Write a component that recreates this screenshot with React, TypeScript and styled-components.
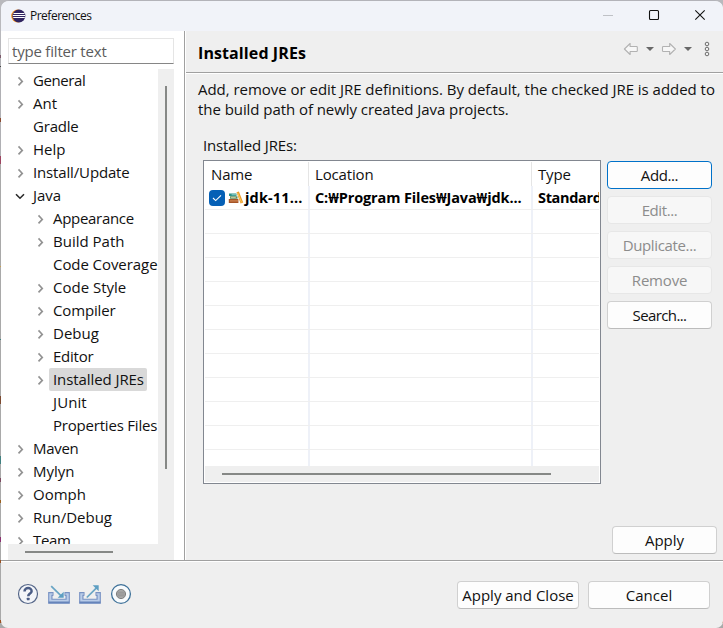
import React from "react";
import styled, { createGlobalStyle, css } from "styled-components";

const Global = createGlobalStyle`
  * { box-sizing: border-box; }
  html, body { margin: 0; background: #b4b4b8; }
  body { overflow: hidden; }
  button { font: inherit; }
`;

const Desktop = styled.div`
  width: 723px;
  height: 628px;
  padding-left: 1px;
  background: linear-gradient(
    #b9b9bd 0 55px, #7c5a6a 55px 58px, #b0b0b4 58px 66px, #444 66px 67px, #b0b0b4 67px 118px,
    #8a4a30 118px 122px, #b0b0b4 122px 156px, #9c4460 156px 164px, #a9a9a9 164px 266px,
    #c8a050 266px 267px, #a9a9a9 267px 339px, #408080 339px 340px, #a9a9a9 340px 396px,
    #7c4a30 396px 404px, #a9a9a9 404px 456px, #408080 456px 464px, #a9a9a9 464px 478px,
    #7c4a60 478px 482px, #a9a9a9 482px 500px, #9a6020 500px 503px, #a9a9a9 503px 537px,
    #8a3070 537px 542px, #a9a9a9 542px 560px, #9a5020 560px 563px, #a9a9a9 563px 620px, #9a5020 620px 623px, #a9a9a9 623px
  );
  font-family: "Open Sans", "Noto Sans", "Noto Sans CJK KR", sans-serif;
  font-size: 15px;
  color: #111;
`;

const Window = styled.div`
  display: grid;
  grid-template-rows: 30px 529px 1fr;
  height: 628px;
  border-top: 1px solid #b3b3b9;
  border-radius: 8px 8px 7px 7px;
  overflow: hidden;
  background: #efefef;
`;

const TitleBar = styled.header`
  display: flex;
  align-items: center;
  padding: 0 17px 0 10px;
  background: #f1f3f9;
  font-size: 12px;
`;

const Title = styled.span`
  flex: 1;
  margin: -1px 0 0 4px;
  letter-spacing: -0.5px;
`;

const Caption = styled.div`
  display: flex;
  align-items: center;
  gap: 34px;
  margin-top: -2px;
`;

const Body = styled.div`
  display: grid;
  grid-template-columns: 184px 1fr;
  min-height: 0;
`;

const Sidebar = styled.aside`
  display: grid;
  grid-template-rows: 25px 475px 16px;
  grid-template-columns: 150px 16px;
  padding: 7px 9px 0 7px;
  background: #fff;
  border-right: 1px solid #a0a0a0;
`;

const Filter = styled.input`
  grid-column: 1 / 3;
  width: 166px;
  height: 26px;
  padding: 0 0 1px 3px;
  border: 1px solid #e5e5e5;
  border-bottom-color: #868686;
  outline: none;
  background: #fff;
  font: inherit;
  letter-spacing: -0.2px;
  &::placeholder { color: #5c5c5c; opacity: 1; }
`;

const Tree = styled.ul`
  height: 475px;
  margin: 6px 0 0;
  padding: 0;
  overflow: hidden;
  list-style: none;
`;

const Node = styled.li<{ $child?: boolean }>`
  display: flex;
  height: 23px;
  align-items: center;
  padding-left: ${(p) => (p.$child ? 26 : 6)}px;
`;

const Twisty = styled.span`
  display: flex;
  flex: none;
  width: 15px;
  height: 12px;
`;

const NodeLabel = styled.span<{ $selected?: boolean; $track?: number }>`
  padding: 0 3px 0 4px;
  height: 23px;
  line-height: 23px;
  border-radius: 2px;
  white-space: nowrap;
  letter-spacing: ${(p) => p.$track ?? 0}px;
  ${(p) => p.$selected && css`background: #d9d9d9;`}
`;

const VTrack = styled.div`
  height: 475px;
  margin-top: 6px;
  padding: 17px 7px 0;
  background: #efefef;
`;

const HTrack = styled.div<{ $lead: number }>`
  grid-column: 1 / 3;
  height: 16px;
  padding: 7px 0 0 ${(p) => p.$lead}px;
  background: #efefef;
`;

const Thumb = styled.div<{ $w: number; $h: number }>`
  width: ${(p) => p.$w}px;
  height: ${(p) => p.$h}px;
  background: #868886;
`;

const SidebarFoot = styled(HTrack)`
  margin-top: 6px;
`;

const Main = styled.main`
  display: flex;
  flex-direction: column;
  border-left: 1px solid #fff;
  min-width: 0;
`;

const PageHead = styled.div`
  display: flex;
  align-items: center;
  height: 42px;
  padding: 0 12px 0 12px;
  border-bottom: 1px solid #a0a0a0;
  box-shadow: 0 1px #fff;
`;

const Heading = styled.h1`
  flex: 1;
  margin: 2px 0 0;
  font-size: 16px;
  font-weight: 700;
  line-height: 22px;
  letter-spacing: 0.1px;
  color: #000;
`;

const Intro = styled.p`
  margin: 6px 0 0 12px;
  line-height: 20px;
  white-space: nowrap;
`;

const Line = styled.span<{ $track?: number }>`
  display: block;
  letter-spacing: ${(p) => p.$track ?? 0}px;
`;

const TableLabel = styled.div`
  margin: 16px 0 0 17px;
  height: 25px;
  line-height: 20px;
  letter-spacing: -0.15px;
`;

const Work = styled.div`
  display: flex;
  gap: 6px;
  padding-left: 17px;
`;

const Table = styled.div`
  width: 398px;
  height: 324px;
  padding: 1px;
  border: 1px solid #828790;
  background: #fff;
`;

const Columns = styled.div`
  display: grid;
  grid-template-columns: 105px 223px 66px;
  overflow: hidden;
`;

const HeaderRow = styled(Columns)`
  height: 24px;
`;

const HeadCell = styled.div<{ $last?: boolean }>`
  margin-right: 1px;
  padding-left: 5px;
  line-height: 25px;
  letter-spacing: -0.15px;
  border-right: ${(p) => (p.$last ? "0" : "1px solid #e5e5e5")};
  &:first-child { padding-left: 6px; }
`;

const Row = styled(Columns)<{ $last?: boolean }>`
  height: ${(p) => (p.$last ? 16 : 24)}px;
  border-bottom: ${(p) => (p.$last ? "0" : "1px solid #efefef")};
`;

const Cell = styled.div<{ $last?: boolean; $track?: number }>`
  display: flex;
  align-items: center;
  padding-left: 5px;
  overflow: hidden;
  white-space: nowrap;
  font-weight: 700;
  font-size: 14.5px;
  line-height: 22px;
  color: #000;
  letter-spacing: ${(p) => p.$track ?? 0}px;
  border-right: ${(p) => (p.$last ? "0" : "2px solid #eef1f8")};
  &:first-child { padding-left: 4px; }
`;

const Side = styled.div`
  display: flex;
  flex-direction: column;
  gap: 7px;
  padding-top: 1px;
`;

const Button = styled.button<{ $w?: number; $focus?: boolean; $track?: number }>`
  width: ${(p) => p.$w ?? 105}px;
  height: 28px;
  padding: 0 0 1px;
  border: 1px solid #d0d0d0;
  border-bottom-color: #bcbcbc;
  border-radius: 4px;
  background: #fdfdfd;
  color: #111;
  white-space: nowrap;
  letter-spacing: ${(p) => p.$track ?? 0}px;
  &:disabled {
    color: #8c8c8c;
    background: #f7f7f7;
    border-color: #e7e7e7;
  }
  ${(p) => p.$focus && css`border-color: #0071c9;`}
`;

const ApplyRow = styled.div`
  display: flex;
  justify-content: flex-end;
  margin: auto 6px 6px 0;
`;

const Footer = styled.footer`
  display: flex;
  align-items: flex-start;
  justify-content: space-between;
  border-top: 1px solid #a0a0a0;
  box-shadow: inset 0 1px #fff;
  padding: 20px 13px 0 16px;
`;

const IconBar = styled.div`
  display: flex;
  gap: 9px;
  padding-top: 2px;
`;

const ButtonBar = styled.div`
  display: flex;
  gap: 9px;
`;

const Icon = styled.svg`
  display: block;
  flex: none;
`;

const HeaderTools = styled.div`
  display: flex;
  align-items: center;
  padding-bottom: 5px;
`;

function Arrow({ open }: { open?: boolean }) {
  return (
    <Icon width="12" height="12" viewBox="0 0 12 12" fill="none" strokeWidth="1.6">
      {open ? (
        <path d="M2 4.3 6 8.2 10 4.3" stroke="#2b2b2b" />
      ) : (
        <path d="M4.5 2.4 8.3 6.4 4.5 10.4" stroke="#929292" />
      )}
    </Icon>
  );
}

function EclipseLogo() {
  return (
    <Icon width="15" height="14" viewBox="0 0 15 14">
      <circle cx="6.6" cy="7" r="6.4" fill="#f39322" />
      <circle cx="7.9" cy="7" r="6.5" fill="#302460" />
      <path d="M2.5 4.5h11M1.8 6.5h12.4M2.2 8.5h11.6" stroke="#fff" strokeWidth="1" />
    </Icon>
  );
}

function NavArrow({ right }: { right?: boolean }) {
  return (
    <Icon width="16" height="14" viewBox="0 0 16 14">
      <path
        d={right ? "M14.4 7 8.7 1.5v3H2.3q-.8 0-.8.8v3.4q0 .8.8.8h6.4v3z" : "M1.4 7l5.7-5.5v3h6.4q.8 0 .8.8v3.4q0 .8-.8.8H7.1v3z"}
        fill="#f7f7f7" stroke="#b2b2b2" strokeWidth="1.1" strokeLinejoin="round"
      />
    </Icon>
  );
}

const Caret = styled.span<{ $after: number }>`
  margin: 0 ${(p) => p.$after}px 0 7px;
  border: 4px solid transparent;
  border-top-color: #686868;
  border-bottom: 0;
`;

function Books() {
  return (
    <Icon width="17" height="14" viewBox="0 0 17 14">
      <path d="M1 2.5h7.5V5H1z" fill="#2c9188" /><path d="M3.6 3.2h5v1h-5z" fill="#8fd0c8" />
      <path d="M2 5.2h7.5v2.6H2z" fill="#5f8b5c" /><path d="M2.8 6h5v.9h-5z" fill="#b9c99c" />
      <path d="M.8 8h9.6v4H.8z" fill="#a65426" /><path d="M2 9.2h8v1.2H2z" fill="#cd8352" />
      <path d="m8.5 1.3 2.4-.7 4.3 10.9-2.6.9z" fill="#e99a28" />
      <path d="m9.5 1.8 4.1 9.7" stroke="#ffcf6b" strokeWidth=".9" />
    </Icon>
  );
}

const Check = styled.span`
  display: flex;
  flex: none;
  align-items: center;
  justify-content: center;
  width: 16px;
  height: 16px;
  margin-right: 3px;
  border-radius: 4px;
  background: #0560b6;
`;

function HelpIcon() {
  return (
    <Icon width="22" height="22" viewBox="0 0 22 22" fill="none">
      <circle cx="11" cy="11" r="9.5" fill="#f3f5f9" stroke="#566789" strokeWidth="1.2" />
      <path d="M7.5 8.4c0-4.5 7.3-4.3 7.1-.2-.1 2.4-3.4 2.4-3.4 5.1" stroke="#4b5d86" strokeWidth="2.5" />
      <rect x="9.8" y="14.7" width="2.8" height="2.6" rx=".6" fill="#4b5d86" />
    </Icon>
  );
}

function TrayIcon({ out }: { out?: boolean }) {
  return (
    <Icon width="22" height="22" viewBox="0 0 22 22" fill="none">
      <path d="M.7 9.6h3.6v6.6h13.4V9.6h3.6v10.6H.7z" fill="#b9cce8" />
      <path d="M5 12.4H3.9v3.9h14.2v-3.9H17M5 9.6H.7v10.6h20.6V9.6H17M5 9v3.8M17 9v3.8" stroke="#7892c3" strokeWidth="1.1" />
      <path d="M.6 19.4h20.8" stroke="#6684ba" strokeWidth="1.6" />
      <path d={out ? "M7.8 14.5 17.5 4.8" : "M3.2 3.2 13.4 13.2"} stroke="#68a4c4" strokeWidth="1.7" />
      <path d={out ? "M13.7 2.2h6v6z" : "M15.7 8.8v6h-6z"} fill="#5d9ec2" />
    </Icon>
  );
}

function RecordIcon() {
  return (
    <Icon width="22" height="22" viewBox="0 0 22 22">
      <circle cx="11" cy="11" r="9.4" fill="#f8fbfd" stroke="#3e7199" strokeWidth="1.3" />
      <circle cx="11" cy="11" r="4.6" fill="#a9a9a9" stroke="#808080" strokeWidth="1" />
      <path d="M7.5 9.2h7M7.2 11h7.6M7.5 12.8h7" stroke="#8d8d8d" strokeWidth=".8" />
    </Icon>
  );
}

type Item = { name: string; child?: boolean; leaf?: boolean; open?: boolean; selected?: boolean; track?: number };

const items: Item[] = [
  { name: "General", track: -0.4 },
  { name: "Ant" },
  { name: "Gradle", leaf: true, track: -0.2 },
  { name: "Help" },
  { name: "Install/Update", track: -0.15 },
  { name: "Java", open: true },
  { name: "Appearance", child: true, track: -0.3 },
  { name: "Build Path", child: true },
  { name: "Code Coverage", child: true, leaf: true, track: -0.07 },
  { name: "Code Style", child: true },
  { name: "Compiler", child: true, track: -0.15 },
  { name: "Debug", child: true },
  { name: "Editor", child: true, track: -0.25 },
  { name: "Installed JREs", child: true, selected: true, track: -0.08 },
  { name: "JUnit", child: true, leaf: true, track: 0.1 },
  { name: "Properties Files", child: true, leaf: true, track: -0.2 },
  { name: "Maven", track: -0.3 },
  { name: "Mylyn" },
  { name: "Oomph" },
  { name: "Run/Debug" },
  { name: "Team", track: -0.3 },
];

export default function App() {
  return (
    <Desktop>
      <Global />
      <Window>
        <TitleBar>
          <EclipseLogo />
          <Title>Preferences</Title>
          <Caption>
            <Icon width="12" height="12"><path d="M1 6.5h10" stroke="#bfc1c6" /></Icon>
            <Icon width="12" height="12"><rect x="1.5" y="1.5" width="9" height="9" rx="1" fill="none" stroke="#111" strokeWidth="1.1" /></Icon>
            <Icon width="12" height="12"><path d="m1.3 1.3 9.4 9.4m0-9.4-9.4 9.4" stroke="#111" strokeWidth="1.1" /></Icon>
          </Caption>
        </TitleBar>
        <Body>
          <Sidebar>
            <Filter placeholder="type filter text" />
            <Tree>
              {items.map((it) => (
                <Node key={it.name} $child={it.child}>
                  <Twisty>{!it.leaf && <Arrow open={it.open} />}</Twisty>
                  <NodeLabel $selected={it.selected} $track={it.track}>{it.name}</NodeLabel>
                </Node>
              ))}
            </Tree>
            <VTrack><Thumb $w={2} $h={383} /></VTrack>
            <SidebarFoot $lead={17}><Thumb $w={88} $h={2} /></SidebarFoot>
          </Sidebar>
          <Main>
            <PageHead>
              <Heading>Installed JREs</Heading>
              <HeaderTools>
                <NavArrow /><Caret $after={7} />
                <NavArrow right /><Caret $after={11} />
                <Icon width="8" height="16" viewBox="0 0 8 16" fill="none" stroke="#6e6e6e">
                  <circle cx="4" cy="3" r="1.8" /><circle cx="4" cy="8" r="1.8" /><circle cx="4" cy="13" r="1.8" />
                </Icon>
              </HeaderTools>
            </PageHead>
            <Intro>
              <Line $track={-0.03}>Add, remove or edit JRE definitions. By default, the checked JRE is added to</Line>
              <Line $track={-0.06}>the build path of newly created Java projects.</Line>
            </Intro>
            <TableLabel>Installed JREs:</TableLabel>
            <Work>
              <Table>
                <HeaderRow>
                  <HeadCell>Name</HeadCell>
                  <HeadCell>Location</HeadCell>
                  <HeadCell $last>Type</HeadCell>
                </HeaderRow>
                <Row>
                  <Cell $track={0.15}>
                    <Check>
                      <Icon width="10" height="10" viewBox="0 0 10 10"><path d="m1 5 2.7 2.6L9 2.3" fill="none" stroke="#fff" strokeWidth="1.1" /></Icon>
                    </Check>
                    <Books />
                    jdk-11...
                  </Cell>
                  <Cell $track={-0.12}>C:₩Program Files₩Java₩jdk...</Cell>
                  <Cell $last $track={-0.35}>Standard</Cell>
                </Row>
                {Array.from({ length: 11 }, (_, i) => (
                  <Row key={i} $last={i === 10}>
                    <Cell /><Cell /><Cell $last />
                  </Row>
                ))}
                <HTrack $lead={17}><Thumb $w={329} $h={2} /></HTrack>
              </Table>
              <Side>
                <Button $focus $track={-0.4}>Add...</Button>
                <Button disabled $track={-0.4}>Edit...</Button>
                <Button disabled $track={-0.35}>Duplicate...</Button>
                <Button disabled $track={-0.2}>Remove</Button>
                <Button $track={-0.6}>Search...</Button>
              </Side>
            </Work>
            <ApplyRow><Button>Apply</Button></ApplyRow>
          </Main>
        </Body>
        <Footer>
          <IconBar>
            <HelpIcon />
            <TrayIcon />
            <TrayIcon out />
            <RecordIcon />
          </IconBar>
          <ButtonBar>
            <Button $w={122}>Apply and Close</Button>
            <Button $w={122}>Cancel</Button>
          </ButtonBar>
        </Footer>
      </Window>
    </Desktop>
  );
}
